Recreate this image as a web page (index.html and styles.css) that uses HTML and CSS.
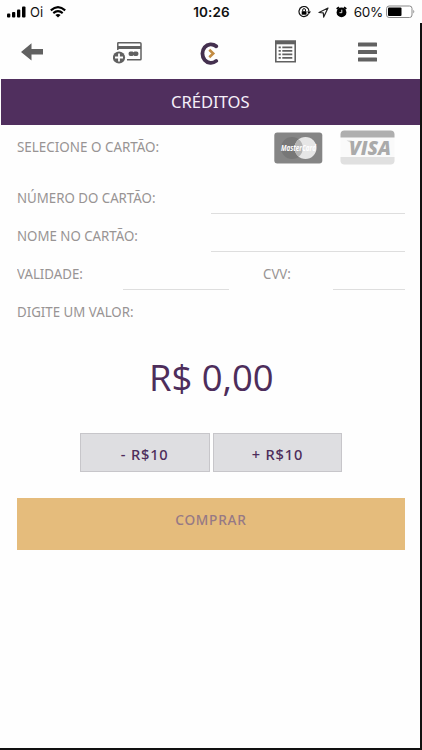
FILE: index.html
```html
<!DOCTYPE html>
<html lang="pt-BR">
<head>
<meta charset="utf-8">
<title>Créditos</title>
<link rel="stylesheet" href="styles.css">
</head>
<body>
<div class="screen">
  <header class="status">
    <div class="status-left">
      <svg width="20" height="12" viewBox="0 0 20 12"><rect x="0" y="7.500" width="3.300" height="4" rx="1"/><rect x="5" y="6" width="3.300" height="5.500" rx="1"/><rect x="10" y="3.500" width="3.300" height="8" rx="1"/><rect x="15" y="0.500" width="3.500" height="11" rx="1"/></svg>
      <span class="carrier">Oi</span>
      <svg width="16" height="12" viewBox="0 0 16 12"><g fill="none" stroke="#000" stroke-width="2.100"><path d="M.8 4.400Q8-2 15.200 4.400"/><path d="M3.300 7.100Q8 3 12.700 7.100"/></g><path d="M5.400 9Q8 6.800 10.600 9L8 11.600z"/></svg>
    </div>
    <time class="clock">10:26</time>
    <div class="status-right">
      <svg width="13" height="12" viewBox="0 0 13 12"><path d="M10.600 7.500A5 5 0 1 1 11 5.500" fill="none" stroke="#111" stroke-width="1.200"/><path d="M9 5.400h4L11 8z"/><rect x="3.700" y="5.200" width="4.800" height="3.500"/><path d="M4.700 5.200V4a1.400 1.400 0 0 1 2.800 0v1.200" fill="none" stroke="#111"/></svg>
      <svg class="arrow" width="11" height="11" viewBox="0 0 11 11"><path d="M10 1L1 5.500l4.300.3.400 4.300z" fill="none" stroke="#222" stroke-width="1.200" stroke-linejoin="round"/></svg>
      <svg class="alarm" width="11" height="12" viewBox="0 0 11 12"><circle cx="5.500" cy="6.400" r="4.900"/><path d="M.7 3L3 1.200M10.300 3L8 1.200" stroke="#000" stroke-width="1.800"/><path d="M5.800 3.700v3H3.500" fill="none" stroke="#fff" stroke-width=".9"/></svg>
      <span class="percent">60%</span>
      <svg width="30" height="14" viewBox="0 0 30 14"><rect x=".6" y="1" width="25.400" height="11.500" rx="2.500" fill="#fff" stroke="#888" stroke-width="1"/><rect x="2" y="2.500" width="13.500" height="8.500" rx="1"/><path d="M27.300 4.800q2 1.700 0 3.800z" fill="#888"/></svg>
    </div>
  </header>
  <main class="app">
    <nav class="toolbar">
      <svg width="22" height="18" viewBox="0 0 22 18" fill="#616161"><path d="M0 9L10.500.3v5.600H22v5.600H10.500v6z"/></svg>
      <svg width="29" height="22" viewBox="0 0 29 22"><path d="M4.800 8V1.200Q4.800 .8 5.300 .8H27Q28 .8 28 1.700V17q0 .8-.8.800H14" fill="none" stroke="#616161" stroke-width="1.500"/><path d="M5 4h23v3H5z" fill="#616161"/><path d="M17.500 9.500h2l1 .8 1-.8h2q2 0 2 2.300t-2 2.300h-2l-1-.8-1 .8h-2q-2 0-2-2.300t2-2.300z" fill="#616161"/><circle cx="6" cy="15.500" r="6.100" fill="#616161"/><path d="M6 11.500v8M2 15.500h8" stroke="#fff" stroke-width="1.800"/></svg>
      <svg width="19" height="24" viewBox="0 0 19 24"><path d="M16.200 5.300A8.500 9.300 0 1 0 16.200 19.900" fill="none" stroke="#44304f" stroke-width="3.800" stroke-linecap="round"/><path d="M9.300 8.800l3.900 3.700-3.900 3.700" fill="none" stroke="#c28b43" stroke-width="2.600"/></svg>
      <svg width="21" height="23" viewBox="0 0 21 23"><path d="M.8 1h19.400v20.800H.8z" fill="none" stroke="#616161" stroke-width="1.600"/><path d="M1 1h19v3.300H1z" fill="#616161"/><path d="M3.600 7.300h2.200M3.600 10.800h2.200M3.600 14.300h2.200M3.600 17.800h2.200M7.300 7.300h10M7.300 10.800h10M7.300 14.300h10M7.300 17.800h10" stroke="#616161" stroke-width="1.700"/></svg>
      <svg width="19" height="20" viewBox="0 0 19 20" fill="#616161"><rect width="19" height="4" y=".5" rx=".6"/><rect y="8" width="19" height="4" rx=".6"/><rect y="15.500" width="19" height="4" rx=".6"/></svg>
    </nav>
    <h1 class="title"><span>CRÉDITOS</span></h1>
    <form class="form">
      <div class="row brands"><span class="label">SELECIONE O CARTÃO:</span>
        <svg width="49" height="32" viewBox="0 0 49 32"><rect x=".3" y=".5" width="48" height="31" rx="3" fill="#858585"/><circle cx="18" cy="16" r="11" fill="#777"/><circle cx="31.500" cy="16" r="11" fill="#e6e6e6"/><path d="M24.700 7.300a11 11 0 0 1 0 17.400a11 11 0 0 1 0-17.400z" fill="#b4b4b4"/><text class="mc" x="7" y="19" textLength="35" lengthAdjust="spacingAndGlyphs">MasterCard</text></svg>
        <svg width="55" height="35" viewBox="0 0 55 35"><rect x=".5" y=".5" width="54" height="34" rx="4" fill="#fafafa"/><path d="M.5 7.500V4.500a4 4 0 0 1 4-4h46a4 4 0 0 1 4 4v3z" fill="#afafaf"/><path d="M.5 27v3.500a4 4 0 0 0 4 4h46a4 4 0 0 0 4-4V27z" fill="#e0e0e0"/><path d="M6.500 10.500h5l3 7q-3-5-8-7z" fill="#d5d5d5"/><text class="visa" x="9" y="24.500" textLength="42" lengthAdjust="spacingAndGlyphs">VISA</text></svg>
      </div>
      <label class="row number"><span class="label">NÚMERO DO CARTÃO:</span><i class="line"></i></label>
      <label class="row"><span class="label">NOME NO CARTÃO:</span><i class="line"></i></label>
      <div class="row dates"><span class="label">VALIDADE:</span><i class="line"></i><span class="label">CVV:</span><i class="line"></i></div>
      <div class="row"><span class="label">DIGITE UM VALOR:</span></div>
      <output class="amount"><span>R$ 0,00</span></output>
      <div class="steps"><button type="button"><span>- R$10</span></button><button type="button"><span>+ R$10</span></button></div>
      <button type="button" class="buy"><span>COMPRAR</span></button>
    </form>
  </main>
</div>
</body>
</html>
```
FILE: styles.css
```css
* { box-sizing: border-box; }
body { margin: 0; background: #fefefe; font-family: "Noto Sans", sans-serif; }
.screen { height: 750px; display: flex; flex-direction: column; overflow: hidden; }
svg { display: block; flex: none; }
.status { height: 23px; display: grid; grid-template-columns: 1fr auto 1fr; align-items: center; font-family: Inter, sans-serif; padding: 1px 6px 0 7px; color: #111; }
.status-left, .status-right { display: flex; align-items: center; }
.carrier { font-size: 13px; margin: 0 7px 0 3px; }
.clock { font-size: 13.500px; font-weight: 600; letter-spacing: .15px; }
.status-right { justify-content: flex-end; }
.arrow { margin-left: 7px; }
.alarm { margin-left: 7px; }
.percent { font-size: 13.500px; margin: 0 3px 0 7px; letter-spacing: -.3px; }
.app { flex: 1; border-right: 2px solid #111; border-bottom: 2px solid #111; padding-left: 1px; }
.toolbar { height: 56px; display: grid; grid-template-columns: 92px 88px 74px 83px 1fr; align-items: center; padding: 1px 0 0 19.500px; }
.toolbar svg:nth-child(2), .toolbar svg:nth-child(3) { margin-top: 2px; }
.toolbar svg:nth-child(3) { margin-left: -1px; }
.title { margin: 0; height: 46px; background: #502f5e; color: #f6effa; font-size: 17px; font-weight: 400; display: flex; align-items: center; justify-content: center; padding-bottom: 1px; }
.title span { transform: scaleX(.975); }
.form { padding: 0 15px 0 16px; }
.row { height: 38.200px; display: flex; align-items: center; }
.brands { height: 45px; }
.brands .label { width: 257px; padding-bottom: 3px; }
.brands svg + svg { margin-left: 17px; }
.number { margin-top: 8.500px; }
.label { color: #989494; font-size: 14.500px; width: 194px; padding-bottom: 2px; white-space: nowrap; transform: scaleX(.915); transform-origin: left; flex: none; }
.brands .label { transform: scaleX(.925); }
.line { flex: 1; align-self: flex-end; height: 1px; background: #dedede; margin-bottom: 3px; }
.dates { display: grid; grid-template-columns: 106px 106px 34px 70px 72px; }
.dates .label:nth-of-type(2) { grid-column: 4; }
.dates .line:last-child { grid-column: 5; }
.amount { height: 102px; display: flex; align-items: center; justify-content: center; padding-bottom: 12px; color: #4d2d5b; font-family: "Open Sans", sans-serif; font-size: 37px; font-weight: 370; line-height: 1; }
.amount span { transform: scaleX(.985); }
button { font: inherit; padding: 0; }
.steps { display: flex; justify-content: center; gap: 3px; }
.steps button { width: 129.500px; height: 39px; padding-top: 2px; background: #dedee1; border: 1px solid #c7c6ca; color: #4d2d5b; font-size: 14.500px; font-weight: 500; letter-spacing: .8px; }
.steps span { display: inline-block; transform: scaleX(1.01); }
.buy { display: block; width: 100%; height: 52px; margin-top: 26px; padding-bottom: 10px; border: 0; background: #e5bc7c; color: #967985; font-size: 14.500px; font-weight: 500; letter-spacing: .8px; }
.buy span { display: inline-block; transform: scaleX(.94); }
.mc { font: italic 700 8px "Open Sans", sans-serif; fill: #fff; }
.visa { font: italic 800 20px "Open Sans", sans-serif; fill: #aaa; }
```
